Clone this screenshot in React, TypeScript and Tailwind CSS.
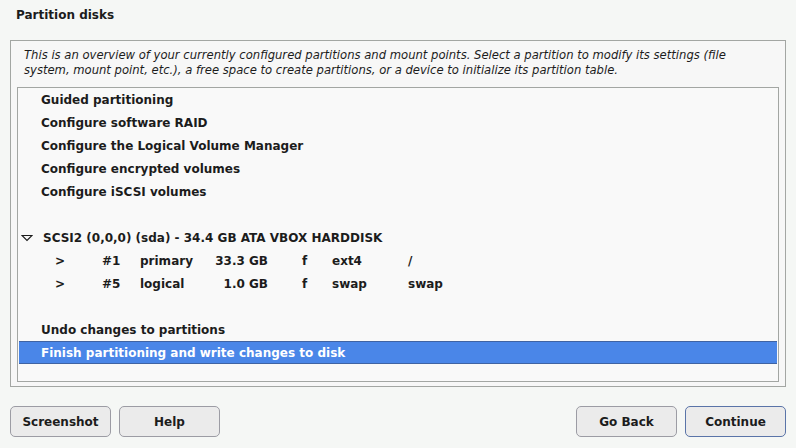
const font = { fontFamily: '"DejaVu Sans", Verdana, sans-serif' };

type Part = { num: string; type: string; size: string; fs: string; mount: string };

const parts: Part[] = [
  { num: "#1", type: "primary", size: "33.3 GB", fs: "ext4", mount: "/" },
  { num: "#5", type: "logical", size: "1.0 GB", fs: "swap", mount: "swap" },
];

const Row = ({ children, selected }: { children?: React.ReactNode; selected?: boolean }) => (
  <div
    className={`flex items-center h-[23px] pl-[22px] whitespace-pre ${
      selected ? "bg-[#4a86e8] text-white border-y border-[#3f63a3]" : "text-[#1c1c1c]"
    }`}
  >
    {children}
  </div>
);

const Button = ({ label, focused }: { label: string; focused?: boolean }) => (
  <button
    className={`w-[101px] h-[31px] rounded-[5px] border bg-[#ebebeb] text-[12px] font-bold text-[#1c1c1c] ${
      focused ? "border-[#5a74a8]" : "border-[#9c9ca4]"
    }`}
  >
    {label}
  </button>
);

export default function App() {
  return (
    <div className="w-[796px] h-[448px] bg-[#f5f7f5] flex flex-col overflow-hidden" style={font}>
      <h1 className="text-[12px] font-bold text-[#1c1c1c] pl-[16px] pt-[6px] h-[40px]">Partition disks</h1>
      <div className="mx-[10px] h-[347px] border border-[#a3a6a3] bg-[#f7f7f7] flex flex-col px-[6px]">
        <p className="italic text-[11.6px] leading-[15px] text-[#1c1c1c] pt-[7px] pl-[7px] h-[46px] whitespace-nowrap">
          This is an overview of your currently configured partitions and mount points. Select a partition to modify its settings (file
          <br />
          system, mount point, etc.), a free space to create partitions, or a device to initialize its partition table.
        </p>
        <div className="h-[295px] border border-[#a3a6a3] bg-[#f9f9f9] px-px text-[12px] font-bold">
          <Row>Guided partitioning</Row>
          <Row>Configure software RAID</Row>
          <Row>Configure the Logical Volume Manager</Row>
          <Row>Configure encrypted volumes</Row>
          <Row>Configure iSCSI volumes</Row>
          <Row />
          <div className="flex items-center h-[23px] text-[#1c1c1c]">
            <svg width="12" height="8" viewBox="0 0 12 8" className="ml-[2px] mr-[10px]">
              <path d="M1 1.5 L11 1.5 L6 6.5 Z" fill="none" stroke="#1c1c1c" strokeWidth="1.1" />
            </svg>
            SCSI2 (0,0,0) (sda) - 34.4 GB ATA VBOX HARDDISK
          </div>
          {parts.map((p) => (
            <div key={p.num} className="flex items-center h-[23px] text-[#1c1c1c] whitespace-nowrap">
              <span className="w-[47px] ml-[36px] shrink-0">&gt;</span>
              <span className="w-[38px] shrink-0">{p.num}</span>
              <span className="w-[72px] shrink-0">{p.type}</span>
              <span className="w-[56px] shrink-0 text-right">{p.size}</span>
              <span className="w-[30px] ml-[34px] shrink-0">f</span>
              <span className="w-[76px] shrink-0">{p.fs}</span>
              <span>{p.mount}</span>
            </div>
          ))}
          <Row />
          <Row>Undo changes to partitions</Row>
          <Row selected>Finish partitioning and write changes to disk</Row>
        </div>
      </div>
      <div className="flex mt-[19px] px-[10px]">
        <div className="flex gap-[8px]">
          <Button label="Screenshot" />
          <Button label="Help" />
        </div>
        <div className="flex gap-[8px] ml-auto">
          <Button label="Go Back" />
          <Button label="Continue" focused />
        </div>
      </div>
    </div>
  );
}
